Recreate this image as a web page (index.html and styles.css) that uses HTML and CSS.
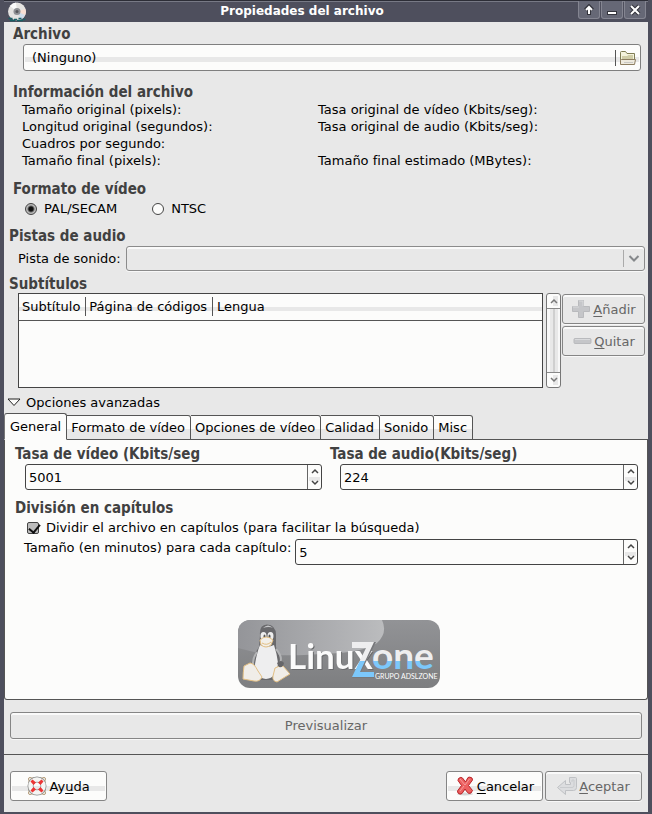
FILE: index.html
```html
<!DOCTYPE html>
<html lang="es">
<head>
<meta charset="utf-8">
<meta name="viewport" content="width=device-width, initial-scale=1">
<title>Propiedades del archivo</title>
<link rel="stylesheet" href="styles.css">
</head>
<body>
<div class="window">
  <header class="titlebar">
    <svg class="disc" viewBox="0 0 20 20" aria-hidden="true">
      <circle cx="10" cy="9.500" r="9" fill="#e4e3e1"/>
      <path d="M10 9.500 3 4A9 9 0 0 1 9 .6z" fill="#fafafa"/>
      <path d="M10 9.500 18.500 7A9 9 0 0 1 16 16z" fill="#f7ddd2"/>
      <path d="M10 9.500 18 13A9 9 0 0 1 14 17.500z" fill="#cfdceb"/>
      <circle cx="10" cy="9.500" r="3.500" fill="#8e9094"/>
      <circle cx="10" cy="9.500" r="1.500" fill="#55565a"/>
      <path d="M1.500 16.500h4M7 17.500h3M11.500 16.500h3M16 17.500h2.500M3 18.500h5M10 18.500h6" stroke="#196066" stroke-width="1.500"/>
    </svg>
    <h1>Propiedades del archivo</h1>
    <div class="window-buttons">
      <button type="button" aria-label="Maximizar"><svg viewBox="0 0 12 12"><path d="M6 11V3M2.500 6 6 2.500 9.500 6" stroke="#33343c" stroke-width="4"/><path d="M6 10V3M3 6 6 3 9 6" stroke="#fff" stroke-width="2"/></svg></button>
      <button type="button" aria-label="Minimizar"><svg viewBox="0 0 12 12"><path d="M1 9h10" stroke="#33343c" stroke-width="4"/><path d="M2 9h8" stroke="#fff" stroke-width="2"/></svg></button>
      <button type="button" aria-label="Cerrar"><svg viewBox="0 0 12 12"><path d="m2 2 8 8M10 2l-8 8" stroke="#33343c" stroke-width="4"/><path d="m2 2 8 8M10 2l-8 8" stroke="#fff" stroke-width="2"/></svg></button>
    </div>
  </header>

  <main>
    <section class="group">
      <h2>Archivo</h2>
      <button type="button" class="file-button">
        <span>(Ninguno)</span>
        <svg viewBox="0 0 18 16" aria-hidden="true">
          <path d="M1.500 14V2.500Q1.500 1.500 2.500 1.500H6.500L8 3.500H15.500V9" fill="#f4f3dd" stroke="#7f7c55"/>
          <path d="M3 13V6H8L9.500 5H14V9H5z" fill="#d0cda8"/>
          <path d="M1.500 14.500V10.500Q1.500 9.500 2.500 9.500H16.500L15.500 14.500z" fill="#eeeade" stroke="#8c7d60"/>
          <path d="M5 12.500h9" stroke="#c9c8c4"/>
        </svg>
      </button>
    </section>

    <section class="group info">
      <h2>Información del archivo</h2>
      <div class="facts">
        <span>Tamaño original (pixels):</span><span>Tasa original de vídeo (Kbits/seg):</span>
        <span>Longitud original (segundos):</span><span>Tasa original de audio (Kbits/seg):</span>
        <span>Cuadros por segundo:</span><span></span>
        <span>Tamaño final (pixels):</span><span>Tamaño final estimado (MBytes):</span>
      </div>
    </section>

    <section class="group format">
      <h2>Formato de vídeo</h2>
      <div class="radios">
        <label><input type="radio" name="norm" checked>PAL/SECAM</label>
        <label><input type="radio" name="norm">NTSC</label>
      </div>
    </section>

    <section class="wide-group audio">
      <h2>Pistas de audio</h2>
      <div class="track-row">
        <label for="track">Pista de sonido:</label>
        <div class="select-box">
          <select id="track" disabled></select>
          <svg viewBox="0 0 12 8" aria-hidden="true"><path d="m1.500 1.500 4.500 4.500 4.500-4.500" fill="none" stroke="#85888b" stroke-width="2"/></svg>
        </div>
      </div>
    </section>

    <section class="wide-group subtitles">
      <h2>Subtítulos</h2>
      <div class="sub-row">
        <div class="tree">
          <table>
            <thead><tr><th><span>Subtítulo</span></th><th><span>Página de códigos</span></th><th><span>Lengua</span></th></tr></thead>
          </table>
        </div>
        <div class="scrollbar">
          <button type="button" aria-label="Subir"><svg viewBox="0 0 8 6"><path d="m1 5 3-3 3 3"/></svg></button>
          <div class="trough"></div>
          <button type="button" aria-label="Bajar"><svg viewBox="0 0 8 6"><path d="m1 1 3 3 3-3"/></svg></button>
        </div>
        <div class="sub-actions">
          <button type="button" class="button" disabled>
            <svg viewBox="0 0 20 20" aria-hidden="true"><path d="M7.500 1.500h5v6h6v5h-6v6h-5v-6h-6v-5h6z" fill="#c5c6c9" stroke="#b9babd"/><path d="M8 2h4v5M2 8h6" fill="none" stroke="#d9dadc"/></svg>
            <span><u>A</u>ñadir</span>
          </button>
          <button type="button" class="button" disabled>
            <svg viewBox="0 0 20 20" aria-hidden="true"><rect x="2" y="7.500" width="17" height="5" rx="1" fill="#c5c6c9" stroke="#b9babd"/><path d="M3 8.500h15" stroke="#d9dadc"/></svg>
            <span><u>Q</u>uitar</span>
          </button>
        </div>
      </div>
    </section>

    <button type="button" class="expander" aria-expanded="true">
      <svg viewBox="0 0 14 9" aria-hidden="true"><path d="M1 1h12L7 7.500z" fill="#fcfcfb" stroke="#222"/></svg>
      <span>Opciones avanzadas</span>
    </button>

    <div class="tabs" role="tablist">
      <button type="button" role="tab" aria-selected="true">General</button>
      <button type="button" role="tab">Formato de vídeo</button>
      <button type="button" role="tab">Opciones de vídeo</button>
      <button type="button" role="tab">Calidad</button>
      <button type="button" role="tab">Sonido</button>
      <button type="button" role="tab">Misc</button>
    </div>
    <div class="panel" role="tabpanel">
      <div class="rates">
        <div class="rate">
          <h2><label for="vrate">Tasa de vídeo (Kbits/seg</label></h2>
          <div class="spin">
            <input id="vrate" type="text" inputmode="numeric" value="5001">
            <div class="steps">
              <button type="button" aria-label="Aumentar"><svg viewBox="0 0 8 6"><path d="m1 5 3-3 3 3"/></svg></button>
              <button type="button" aria-label="Reducir"><svg viewBox="0 0 8 6"><path d="m1 1 3 3 3-3"/></svg></button>
            </div>
          </div>
        </div>
        <div class="rate">
          <h2><label for="arate">Tasa de audio(Kbits/seg)</label></h2>
          <div class="spin">
            <input id="arate" type="text" inputmode="numeric" value="224">
            <div class="steps">
              <button type="button" aria-label="Aumentar"><svg viewBox="0 0 8 6"><path d="m1 5 3-3 3 3"/></svg></button>
              <button type="button" aria-label="Reducir"><svg viewBox="0 0 8 6"><path d="m1 1 3 3 3-3"/></svg></button>
            </div>
          </div>
        </div>
      </div>
      <div class="chapters">
        <h2>División en capítulos</h2>
        <label class="check"><input type="checkbox" checked>Dividir el archivo en capítulos (para facilitar la búsqueda)</label>
        <div class="chapter-size">
          <label for="minutes">Tamaño (en minutos) para cada capítulo:</label>
          <div class="spin">
            <input id="minutes" type="text" inputmode="numeric" value="5">
            <div class="steps">
              <button type="button" aria-label="Aumentar"><svg viewBox="0 0 8 6"><path d="m1 5 3-3 3 3"/></svg></button>
              <button type="button" aria-label="Reducir"><svg viewBox="0 0 8 6"><path d="m1 1 3 3 3-3"/></svg></button>
            </div>
          </div>
        </div>
      </div>
      <div class="brand">
        <svg class="logo" viewBox="0 0 202 68" role="img" aria-label="LinuxZone, Grupo ADSLZone">
          <defs>
            <linearGradient id="plate" x1="0" y1="0" x2="0" y2="1"><stop offset="0" stop-color="#929396"/><stop offset="1" stop-color="#7d7e80"/></linearGradient>
            <linearGradient id="shine" x1="0" y1="0" x2="1" y2="0"><stop offset="0" stop-color="#949599"/><stop offset="1" stop-color="#bbbcbe"/></linearGradient>
            <linearGradient id="split" gradientUnits="userSpaceOnUse" x1="0" y1="0" x2="0" y2="68"><stop offset=".6" stop-color="#eeeeef"/><stop offset=".6" stop-color="#7cc8fb"/></linearGradient>
            <clipPath id="round"><rect width="202" height="68" rx="12"/></clipPath>
          </defs>
          <g clip-path="url(#round)">
            <rect width="202" height="68" fill="url(#plate)"/>
            <path d="M0 0H144Q150 13 139 23 125 33 83 34 42 37 20 33L0 28z" fill="url(#shine)"/>
          </g>
          <path d="M22 15Q21 5 29 4.500 38 5 38 15V27Q40 34 43 39 47 48 43 54L36 60H21L12 47Q16 34 21 27z" fill="#69696c"/>
          <path d="M25 8Q30 3 35 8Q31 6 25 8z" fill="#c5c6c8"/>
          <path d="M22 25Q29 28 36 25Q39 34 40 43 39 58 28 59 17 58 17 44 19 32 22 25z" fill="#eeeeef"/>
          <path d="M19 32Q13 41 16 47M38 29Q45 37 42 43" fill="none" stroke="#b2b3b5" stroke-width="2"/>
          <ellipse cx="25.500" cy="16" rx="3" ry="4" fill="#eee"/><ellipse cx="32.500" cy="16" rx="3" ry="4" fill="#eee"/>
          <ellipse cx="26.500" cy="16.500" rx="1" ry="2" fill="#555"/><ellipse cx="31.500" cy="16.500" rx="1" ry="2" fill="#555"/>
          <path d="M22 20Q28 14 35 20L33 25Q28 29 23 25z" fill="#f2efe9" stroke="#e3bf83"/>
          <path d="M24 23q5 3 9-1" fill="none" stroke="#e3bf83"/>
          <path d="M6 46 12 43Q16 43 20 51L24 57Q22 62 16 61L5 59Q5 53 6 46zM37 48Q40 46 45 46L52 54 47 57 39 62Q34 61 35 56z" fill="#f0ede8" stroke="#e3bf83"/>
          <path d="M39 43q4-4 7 0-1 5-5 4z" fill="#666669"/>
          <text x="50" y="49" class="logo-linux">Linux</text>
          <text x="134" y="49" class="logo-one" fill="url(#split)">one</text>
          <path d="M115 22H138L123 52H136V58H114L129 28H115z" fill="#77787b"/>
          <path d="M114 22H136L122 52H136V57H114L128 28H114z" fill="url(#split)"/>
          <text x="137" y="59" class="logo-sub">GRUPO ADSLZONE</text>
        </svg>
      </div>
    </div>

    <div class="preview"><button type="button" class="button" disabled>Previsualizar</button></div>
  </main>

  <footer>
    <button type="button" class="button help">
      <svg viewBox="0 0 20 20" aria-hidden="true">
        <path d="M2 2h16v16H2z" fill="none" stroke="#b49b78" stroke-dasharray="5 6 5 0"/>
        <circle cx="3" cy="3" r="1.500" fill="#fff" stroke="#b49b78"/><circle cx="17" cy="3" r="1.500" fill="#fff" stroke="#b49b78"/><circle cx="3" cy="17" r="1.500" fill="#fff" stroke="#b49b78"/><circle cx="17" cy="17" r="1.500" fill="#fff" stroke="#b49b78"/>
        <circle cx="10" cy="10" r="6.500" fill="none" stroke="#8b8d8d" stroke-width="6"/>
        <circle cx="10" cy="10" r="6.500" fill="none" stroke="#f5f5f3" stroke-width="4.500"/>
        <path d="m3.500 5.500 2-2L9 6.500 6.500 9zM16.500 5.500l-2-2L11 6.500 13.500 9zM3.500 14.500l2 2L9 13.500 6.500 11zM16.500 14.500l-2 2-3.500-3 2.500-2.500z" fill="#ec3535"/>
      </svg>
      <span>Ay<u>u</u>da</span>
    </button>
    <div class="answers">
      <button type="button" class="button">
        <svg viewBox="0 0 20 20" aria-hidden="true">
          <ellipse cx="10" cy="18" rx="8" ry="1.500" fill="#d6d6d5"/>
          <path d="M3.500 2.500Q6 .5 7.500 2L10.500 6 13 1.500Q14.500 .5 17 2L17.500 4 13.500 9.500 17.500 14.500 16 17Q13.500 18 12.500 16.500L10 13 7 17.500Q5 19 3 17L2.500 15 6.500 9.500 3 4.500z" fill="#ed6060" stroke="#b92328" stroke-linejoin="round"/>
          <path d="m5 3 5 6 4.500-6M5 15l4-5" fill="none" stroke="#f49b9b"/>
        </svg>
        <span><u>C</u>ancelar</span>
      </button>
      <button type="button" class="button" disabled>
        <svg viewBox="0 0 20 20" aria-hidden="true"><path d="M.5 11.500 8.500 4.500V8.500H13.500V6.500H12.500V1.500H18.500Q19.500 1.500 19.500 2.500V11.500Q19.500 14.500 16.500 14.500H8.500V18.500z" fill="#dcdddf" stroke="#bfc1c4"/><path d="M3 11.500h12q2 0 2-2V4h-2v2" fill="none" stroke="#c9cbce"/></svg>
        <span><u>A</u>ceptar</span>
      </button>
    </div>
  </footer>
</div>
</body>
</html>
```
FILE: styles.css
```css
* { box-sizing: border-box; }

body {
  margin: 0;
  background: #4e4f5d;
  color: #000;
  font: 13px/17px "DejaVu Sans", sans-serif;
}

button, input, select { font: inherit; color: inherit; margin: 0; padding: 0; }
button { cursor: pointer; }
button:disabled { cursor: default; }
svg { display: block; flex: none; }

h1, h2 { margin: 0; font-weight: bold; line-height: 17px; }
h1 { font-size: 12px; }
h2 { color: #414141; font-size: 15px; font-family: "DejaVu Sans Condensed", "DejaVu Sans", sans-serif; }

.window {
  min-height: 100vh;
  display: flex;
  flex-direction: column;
  border: solid #4e4f5d;
  border-width: 0 4px 2px;
  background: #e8e8e8;
}

.titlebar {
  height: 22px;
  display: grid;
  grid-template-columns: 24px 1fr 72px;
  align-items: center;
  background: #4e4f5d;
  border-top: 1px solid #2c2d36;
  box-shadow: inset 0 1px #777985;
  color: #fff;
}
.titlebar h1 { text-align: center; }
.disc { width: 20px; height: 20px; margin-left: 3px; }
.window-buttons { display: flex; justify-content: flex-end; align-self: start; gap: 1px; padding-right: 2px; }
.window-buttons button {
  width: 22px;
  height: 18px;
  display: grid;
  place-items: center;
  border: 1px solid #848591;
  border-top: 0;
  border-radius: 0 0 3px 3px;
  background: #666876;
}
.window-buttons svg { width: 12px; height: 12px; fill: none; }

main { flex: 1; padding-top: 4px; }
.group { padding: 0 7px 0 9px; }
.wide-group { padding: 0 3px 0 5px; }
.info { margin-top: 13px; }
.format { margin-top: 12px; }
.audio { margin-top: 11px; }
.subtitles { margin-top: 5px; }

.file-button {
  width: calc(100% - 10px);
  height: 27px;
  margin: 1px 0 0 10px;
  padding: 0 3px 0 8px;
  display: flex;
  align-items: center;
  justify-content: space-between;
  border: 1px solid #7f7f7f;
  border-radius: 3px;
  background: linear-gradient(#e8e8e8, #e8e8e8) 1px 12px / calc(100% - 2px) 5px no-repeat #fcfcfb;
}
.file-button svg { width: 22px; height: 16px; padding-left: 3px; border-left: 1px solid #555; }

.facts { display: grid; grid-template-columns: 296px 1fr; grid-auto-rows: 17px; padding-left: 9px; }

.radios { display: flex; gap: 35px; margin-top: 1px; padding: 1px 0 0 12px; }
.radios label { display: flex; align-items: center; gap: 7px; }
input[type="radio"] {
  appearance: none;
  width: 12px;
  height: 12px;
  border: 1px solid #444;
  border-radius: 50%;
  background: #fcfcfb;
}
input[type="radio"]:checked { background: radial-gradient(circle, #111 0 2px, #bbb 4px); }

.track-row { display: flex; align-items: center; gap: 5px; margin-top: 1px; padding-left: 9px; }
.select-box { flex: 1; display: grid; align-items: center; }
.select-box > * { grid-area: 1 / 1; }
.select-box select {
  appearance: none;
  width: 100%;
  height: 25px;
  border: 1px solid #8b8b8b;
  border-radius: 3px;
  background: #e8e8e8;
  box-shadow: inset 0 2px #fafafa, 0 1px #f8f8f8;
  opacity: 1;
}
.select-box svg { justify-self: end; width: 21px; height: 17px; padding: 4px; border-left: 1px solid #aaa; margin-right: 1px; }

.sub-row { display: flex; align-items: flex-start; padding-left: 9px; }
.tree { flex: 1; height: 95px; border: 1px solid #444; background: #fcfcfb; }
.tree table { width: 100%; border-collapse: collapse; }
.tree thead { background: linear-gradient(#e8e8e8, #e8e8e8) 0 13px / 100% 4px no-repeat; }
.tree tr { height: 26px; border-bottom: 1px solid #555; }
.tree th { padding: 0; font-weight: normal; text-align: left; white-space: nowrap; }
.tree th span { display: block; padding: 1px 5px 1px 3px; border-right: 1px solid #555; }
.tree th:last-child { width: 100%; }
.tree th:last-child span { border: 0; padding-left: 4px; }

.scrollbar {
  width: 15px;
  height: 95px;
  margin: 0 1px 0 3px;
  display: flex;
  flex-direction: column;
  border: 1px solid #777;
  border-radius: 3px;
  background: #fcfcfb;
}
.scrollbar button { height: 14px; display: grid; place-items: center; border: 0; background: linear-gradient(#e8e8e8, #e8e8e8) 6px 2px / 5px 10px no-repeat; }
.scrollbar svg, .steps svg { width: 8px; height: 6px; fill: none; stroke: #444; stroke-width: 1.5; }
.scrollbar svg { stroke: #777; }
.trough {
  flex: 1;
  border: solid #888;
  border-width: 1px 0;
  background: linear-gradient(90deg, #f8f8f8 3px, #e8e8e8 3px 6px, #cfcfcf 6px 8px, #e8e8e8 8px 11px, #f8f8f8 11px);
}

.button {
  display: flex;
  align-items: center;
  justify-content: center;
  gap: 2px;
  height: 30px;
  border: 1px solid #858585;
  border-radius: 3px;
  background: linear-gradient(#e8e8e8, #e8e8e8) 1px 14px / calc(100% - 2px) 5px no-repeat #fcfcfb;
}
.button:disabled {
  color: #666;
  background: #e8e8e8;
  box-shadow: inset 0 2px #fafafa, 0 1px #f8f8f8;
}
.button svg { width: 20px; height: 20px; }
u { text-underline-offset: 2px; }
.sub-actions { width: 83px; display: grid; gap: 2px; margin-top: 1px; }

.expander {
  display: flex;
  align-items: center;
  gap: 5px;
  margin: 6px 0 2px;
  padding-left: 3px;
  border: 0;
  background: none;
}
.expander svg { width: 14px; height: 9px; }

.tabs { display: flex; align-items: flex-end; height: 27px; box-shadow: inset 0 -1px #555; }
.tabs button {
  height: 25px;
  padding: 0 5px 0 4px;
  border: 1px solid #555;
  border-left: 0;
  border-radius: 0 3px 0 0;
  background: linear-gradient(#fcfcfb 13px, #e8e8e8 13px);
}
.tabs button[aria-selected="true"] {
  height: 27px;
  padding-left: 5px;
  border-left: 1px solid #777;
  border-bottom-color: #fcfcfb;
  border-radius: 3px 3px 0 0;
  background: #fcfcfb;
}
.panel {
  padding: 6px 9px 11px 10px;
  border: solid #555;
  border-width: 0 1px 1px;
  border-radius: 0 0 3px 3px;
  background: #fcfcfb;
}
.rates { display: grid; grid-template-columns: 307px 1fr; gap: 8px; }
.spin {
  flex: 1;
  height: 26px;
  display: flex;
  border: 1px solid #444;
  border-radius: 3px;
}
.rate .spin { margin: 1px 0 0 10px; }
.spin input { flex: 1; min-width: 0; border: 0; padding: 0 3px; background: none; outline: 0; }
.steps { width: 14px; display: grid; grid-template-rows: 1fr 1fr; border-left: 1px solid #666; }
.steps button { border: 0; display: grid; place-items: center; background: none; }
.steps button:last-child { background: linear-gradient(#e8e8e8, #e8e8e8) 1px 0 / 11px 4px no-repeat; }
.chapters { margin-top: 10px; }
.check { display: flex; align-items: center; gap: 7px; margin-top: 2px; padding-left: 12px; }
input[type="checkbox"] {
  appearance: none;
  width: 12px;
  height: 12px;
  border: 1px solid #444;
  border-radius: 2px;
  background: #bcbcbc;
}
input[type="checkbox"]:checked::before {
  content: "";
  display: block;
  width: 5px;
  height: 9px;
  margin: -1px 0 0 3px;
  border: solid #111;
  border-width: 0 2px 2px 0;
  transform: rotate(40deg);
}
.chapter-size { display: flex; gap: 4px; margin-top: 3px; padding-left: 9px; }
.brand { display: flex; justify-content: center; padding: 55px 0 0 24px; }
.logo { width: 202px; height: 68px; }
.logo-linux { font: bold 35px Lato, sans-serif; fill: #fbfbfb; filter: drop-shadow(1px 1px 0 #6b6c6e); }
.logo-one { font: bold 37px Lato, sans-serif; }
.logo-sub { font: 7px Lato, sans-serif; fill: #fff; }

.preview { padding: 12px 6px 15px; }
.preview .button { width: 100%; height: 27px; }

footer {
  display: flex;
  justify-content: space-between;
  padding: 16px 6px 11px;
  border-top: 1px solid #555;
}
footer .button { width: 97px; }
.answers { display: flex; gap: 2px; }
```
